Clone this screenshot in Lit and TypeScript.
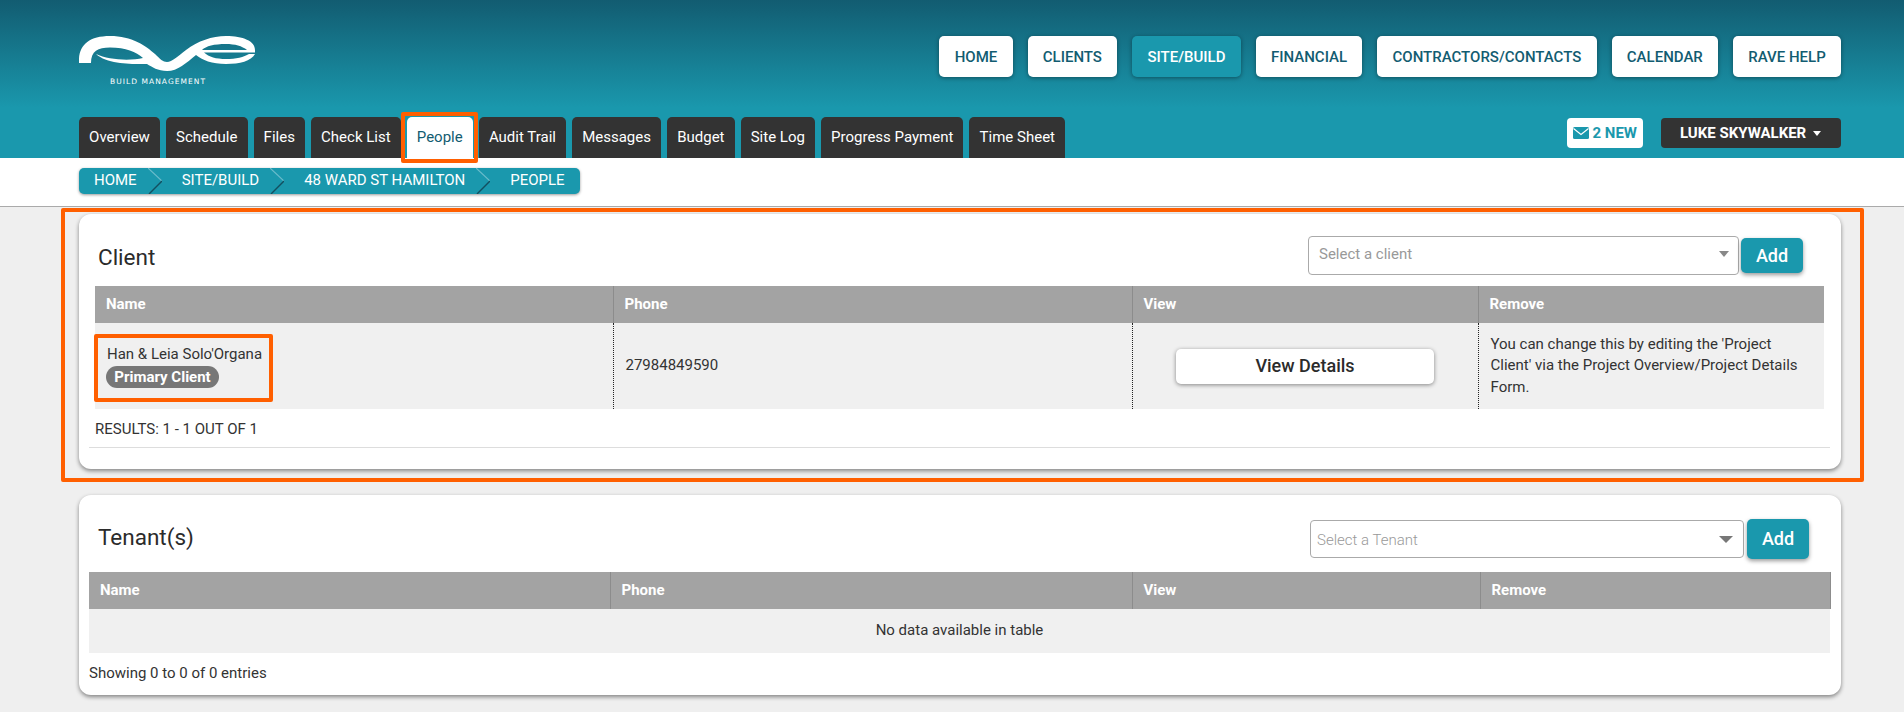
import { LitElement, html, css, svg } from "lit";
import { customElement } from "lit/decorators.js";

const NAV = ["HOME", "CLIENTS", "SITE/BUILD", "FINANCIAL", "CONTRACTORS/CONTACTS", "CALENDAR", "RAVE HELP"];
const TABS = ["Overview", "Schedule", "Files", "Check List", "People", "Audit Trail", "Messages", "Budget", "Site Log", "Progress Payment", "Time Sheet"];
const CRUMBS = ["HOME", "SITE/BUILD", "48 WARD ST HAMILTON", "PEOPLE"];
const HEADS = ["Name", "Phone", "View", "Remove"];
const CLIENT_COLS = [518, 519, 346, 346];
const TENANT_COLS = [521, 522, 348, 350];

const logoPath =
  "M79,63 C78,46 88,36 110,36 C132,36 146,46 155,54 C160,59 163,62 167,62 C172,62 178,56 186,50 C198,41 212,36 226,36 C243,36 255,41 255,50 L247,50 C242,46 235,44 226,44 C214,44 206,46 202,50 L255,50 L255,52.5 L204,52.5 C209,57 216,59 226,59 C236,59 244,57 249,54 L255,54 C251,61 240,64 226,64 C212,64 202,60 196,55 C186,63 178,71 167,71 C158,71 152,67 147,64 C135,64 108,65 96,54 C108,60 130,61 143,58 C136,52 126,47.5 110,47.5 C98,47.5 91,51 91,63 Z";

@customElement("app-root")
export class AppRoot extends LitElement {
  static styles = css`
    :host {
      display: block;
      min-height: 712px;
      background: #efefef;
      font-family: Roboto, "Liberation Sans", sans-serif;
      font-size: 15px;
      line-height: 20px;
      color: #333;
    }
    * { box-sizing: border-box; }
    .header {
      height: 158px;
      padding: 36px 63px 0 79px;
      background: linear-gradient(#125c71 0, #1a98ad 108px, #1a98ad 100%);
    }
    .top { display: flex; justify-content: space-between; height: 81px; }
    .logo { display: flex; flex-direction: column; width: 176px; }
    .logo svg { display: block; }
    .logo-sub {
      margin: 6px 0 0 31px;
      color: #fff;
      font: 400 7.5px/8px "DejaVu Sans", sans-serif;
      letter-spacing: 1.05px;
      white-space: nowrap;
    }
    .nav { display: flex; gap: 15px; height: 41px; }
    .nav-btn {
      display: flex;
      align-items: center;
      padding: 0 15.25px;
      background: #fff;
      color: #125c71;
      font-weight: 500;
      border-radius: 5px;
      box-shadow: 0 1px 4px rgba(0, 0, 0, 0.4);
      white-space: nowrap;
    }
    .nav-btn.on { background: #1a98ad; color: #fff; }
    .bottom { display: flex; justify-content: space-between; height: 41px; }
    .tabs { display: flex; gap: 6px; }
    .tab {
      position: relative;
      display: flex;
      align-items: center;
      padding: 0 10.1px 2px;
      background: #333;
      color: #fff;
      border-radius: 5px 5px 0 0;
      white-space: nowrap;
    }
    .tab.on { background: #fff; color: #125c71; }
    .tab.on::after {
      content: "";
      position: absolute;
      inset: -5px -5px -5px -6px;
      border: 4px solid #ff5f00;
      border-radius: 2px;
    }
    .user-area { display: flex; gap: 18px; margin-top: 1px; height: 30px; }
    .msg {
      display: flex;
      align-items: center;
      gap: 4px;
      padding: 0 6px;
      background: #fff;
      color: #1a98ad;
      font-weight: 700;
      border-radius: 4px;
    }
    .user {
      display: flex;
      align-items: center;
      gap: 7px;
      width: 180px;
      padding-left: 19px;
      background: #333;
      color: #fff;
      font-weight: 700;
      border-radius: 4px;
      white-space: nowrap;
    }
    .caret { width: 0; height: 0; border: 4.5px solid transparent; border-top: 5px solid #fff; border-bottom: 0; }
    .strip {
      height: 49px;
      padding: 10px 0 0 79px;
      background: #fff;
      border-bottom: 1px solid #aaa;
    }
    .crumbs {
      display: inline-flex;
      align-items: center;
      height: 26px;
      padding: 0 15px;
      background: #1a98ad;
      color: #fff;
      border-radius: 5px;
      box-shadow: 0 1px 3px rgba(0, 0, 0, 0.4);
    }
    .crumb { margin-top: -2px; }
    .chev { display: block; margin: 0 20px 0 11px; }
    .main { display: flex; flex-direction: column; gap: 26px; padding: 7px 63px 0 79px; }
    .card {
      position: relative;
      padding: 0 11px 0 10px;
      background: #fff;
      border-radius: 12px;
      box-shadow: 0 2px 4px rgba(0, 0, 0, 0.45);
    }
    .card.client { height: 255px; }
    .card.tenant { height: 200px; }
    .card.client::after {
      content: "";
      position: absolute;
      inset: -6px -23px -13px -18px;
      border: 4px solid #ff5f00;
      border-radius: 2px;
      pointer-events: none;
    }
    .head { display: flex; align-items: flex-start; }
    .client .head { height: 72px; padding: 28px 27px 0 9px; }
    .tenant .head { height: 77px; padding: 27px 21px 0 9px; }
    .title { flex: 1; font-size: 22.5px; line-height: 30px; font-weight: 400; margin: 0; color: #2b2b2b; }
    .select {
      display: flex;
      align-items: center;
      justify-content: space-between;
      background: #fff;
      border: 1px solid #aaa;
      border-radius: 4px;
      color: #999;
    }
    .client .select { width: 431px; height: 39px; margin: -6px 2px 0 0; padding: 0 9px 3px 10px; }
    .tenant .select { width: 434px; height: 38px; margin: -2px 3px 0 0; padding: 2px 10px 0 6px; font-weight: 300; }
    .arrow { width: 0; height: 0; border: 5px solid transparent; border-top: 6px solid #888; border-bottom: 0; }
    .tenant .arrow { border-width: 7px 7px 0; border-top-color: #777; margin-top: -2px; }
    .add {
      display: flex;
      align-items: center;
      justify-content: center;
      width: 62px;
      background: #1a98ad;
      color: #fff;
      font-size: 18px;
      font-weight: 500;
      border-radius: 5px;
      box-shadow: 0 2px 4px rgba(0, 0, 0, 0.4);
    }
    .client .add { height: 35px; margin-top: -4px; }
    .tenant .add { height: 40px; margin-top: -3px; }
    table { width: 100%; table-layout: fixed; border-collapse: collapse; }
    .client table { width: 1729px; margin-left: 6px; }
    th {
      height: 37px;
      padding: 0 0 1px 11px;
      background: #a3a3a3;
      color: #fff;
      font-weight: 700;
      text-align: left;
      border-right: 1px solid #8c8c8c;
    }
    .client th:last-child { border-right: 0; }
    td { padding: 0 12px; background: #f0f0f0; }
    .client td { height: 86px; border-right: 1px dotted #222; line-height: 21.5px; }
    .client td:last-child { border-right: 0; }
    .tenant td { height: 44px; padding-bottom: 2px; text-align: center; }
    .who { position: relative; display: inline-block; vertical-align: middle; }
    .who::after {
      content: "";
      position: absolute;
      inset: -10px -11px -14px -13px;
      border: 4px solid #ff5f00;
      border-radius: 2px;
    }
    .who-name { display: block; line-height: 20px; white-space: nowrap; }
    .pill {
      display: block;
      width: 113px;
      height: 22px;
      margin: 2px 0 0 -1px;
      background: #777;
      color: #fff;
      font-weight: 700;
      line-height: 22px;
      text-align: center;
      border-radius: 11px;
    }
    .view {
      display: flex;
      align-items: center;
      justify-content: center;
      width: 258px;
      height: 35px;
      margin: 0 auto;
      background: #fff;
      color: #2b2b2b;
      font-size: 18px;
      font-weight: 500;
      border-radius: 5px;
      box-shadow: 0 1px 4px rgba(0, 0, 0, 0.45);
    }
    .results { height: 39px; padding: 10px 0 0 6px; border-bottom: 1px solid #ddd; }
    .showing { padding-top: 10px; }
  `;

  private renderTable(cols: number[], body: unknown) {
    return html`<table>
      <colgroup>${cols.map((w) => html`<col style="width:${w}px" />`)}</colgroup>
      <thead><tr>${HEADS.map((h) => html`<th>${h}</th>`)}</tr></thead>
      <tbody>${body}</tbody>
    </table>`;
  }

  render() {
    return html`
      <header class="header">
        <div class="top">
          <div class="logo">
            <svg width="176" height="36" viewBox="79 36 176 36" aria-hidden="true">
              ${svg`<path fill="#fff" d=${logoPath}></path>`}
            </svg>
            <div class="logo-sub">BUILD MANAGEMENT</div>
          </div>
          <nav class="nav">
            ${NAV.map((n) => html`<div class="nav-btn ${n === "SITE/BUILD" ? "on" : ""}">${n}</div>`)}
          </nav>
        </div>
        <div class="bottom">
          <div class="tabs">
            ${TABS.map((t) => html`<div class="tab ${t === "People" ? "on" : ""}">${t}</div>`)}
          </div>
          <div class="user-area">
            <div class="msg">
              <svg width="16" height="12" viewBox="0 0 16 12" aria-hidden="true">
                <rect width="16" height="12" rx="1.5" fill="#1a98ad"></rect>
                <path d="M0.5 1.5 L8 7.5 L15.5 1.5" fill="none" stroke="#fff" stroke-width="1.2"></path>
              </svg>
              2 NEW
            </div>
            <div class="user">LUKE SKYWALKER <span class="caret"></span></div>
          </div>
        </div>
      </header>
      <div class="strip">
        <div class="crumbs">
          ${CRUMBS.map(
            (c, i) => html`<span class="crumb">${c}</span>${i < CRUMBS.length - 1
                ? html`<svg class="chev" width="14" height="26" viewBox="0 0 14 26" aria-hidden="true">
                    <path d="M0 0 L14 13" fill="none" stroke="#6bbccb" stroke-width="1.2"></path>
                    <path d="M14 13 L1 26" fill="none" stroke="#124f60" stroke-width="1.4"></path>
                  </svg>`
                : ""}`
          )}
        </div>
      </div>
      <main class="main">
        <section class="card client">
          <div class="head">
            <h2 class="title">Client</h2>
            <div class="select"><span>Select a client</span><span class="arrow"></span></div>
            <div class="add">Add</div>
          </div>
          ${this.renderTable(
            CLIENT_COLS,
            html`<tr>
              <td>
                <span class="who">
                  <span class="who-name">Han &amp; Leia Solo'Organa</span>
                  <span class="pill">Primary Client</span>
                </span>
              </td>
              <td>27984849590</td>
              <td><div class="view">View Details</div></td>
              <td>You can change this by editing the 'Project Client' via the Project Overview/Project Details Form.</td>
            </tr>`
          )}
          <div class="results">RESULTS: 1 - 1 OUT OF 1</div>
        </section>
        <section class="card tenant">
          <div class="head">
            <h2 class="title">Tenant(s)</h2>
            <div class="select"><span>Select a Tenant</span><span class="arrow"></span></div>
            <div class="add">Add</div>
          </div>
          ${this.renderTable(TENANT_COLS, html`<tr><td colspan="4">No data available in table</td></tr>`)}
          <div class="showing">Showing 0 to 0 of 0 entries</div>
        </section>
      </main>
    `;
  }
}
